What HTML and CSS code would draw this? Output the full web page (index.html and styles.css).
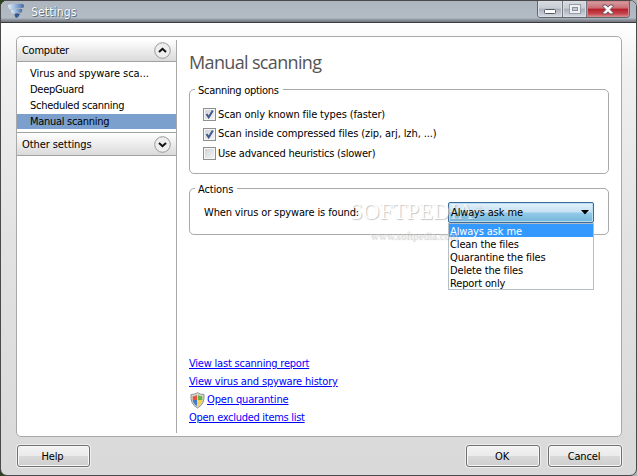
FILE: index.html
```html
<!DOCTYPE html>
<html lang="en">
<head>
<meta charset="utf-8">
<title>Settings</title>
<link rel="stylesheet" href="styles.css">
</head>
<body>
<div class="window">
  <header class="titlebar">
    <svg class="logo" width="18" height="18" viewBox="0 0 18 18">
      <defs><linearGradient id="lg" x1="0" x2="1"><stop offset="0" stop-color="#e4eefa"/><stop offset=".5" stop-color="#8fb0da"/><stop offset="1" stop-color="#44689f"/></linearGradient></defs>
      <path d="M1 4Q6 2 16 3Q18 5 16 7Q9 6 4 9Q1 8 1 4Z" fill="url(#lg)"/>
      <path d="M4 9.5Q8 7 15 8Q16 11 13 12Q9 10 7 13Q4 12 4 9.5Z" fill="url(#lg)"/>
      <path d="M7.5 13.5Q9 11.5 13 13Q12 16 9 17Q7.5 15 7.5 13.5Z" fill="#34588f"/>
    </svg>
    <h1 class="caption">Settings</h1>
    <div class="controls">
      <span class="control minimize"><svg width="12" height="6"><rect x=".5" y=".5" width="11" height="4" rx="1" fill="#fff" stroke="#555b65"/></svg></span>
      <span class="control maximize"><svg width="12" height="10"><rect x=".5" y=".5" width="11" height="9" fill="#eef0f3" stroke="#989ea8"/><rect x="3.5" y="3.5" width="5" height="3" fill="#c3cad3" stroke="#8a919b"/></svg></span>
      <span class="control close"><svg width="12" height="11" viewBox="0 0 12 11"><path d="M1 1H4L6 3.2L8 1H11V2.5L8.2 5.5L11 8.5V10H8L6 7.8L4 10H1V8.5L3.8 5.5L1 2.5Z" fill="#fff" stroke="#6b5660"/></svg></span>
    </div>
  </header>
  <main class="panel">
    <nav class="sidebar">
      <div class="group first"><span class="tight">Computer</span>
        <svg width="17" height="17"><circle cx="8.5" cy="8.5" r="7.8" fill="#eee" stroke="#999"/><path d="M5 10L8.5 6.8L12 10" fill="none" stroke="#111" stroke-width="2"/></svg>
      </div>
      <ul class="items">
        <li class="virus">Virus and spyware sca...</li>
        <li class="tight">DeepGuard</li>
        <li class="tight">Scheduled scanning</li>
        <li class="current tight">Manual scanning</li>
      </ul>
      <div class="group second"><span>Other settings</span>
        <svg width="17" height="17"><circle cx="8.5" cy="8.5" r="7.8" fill="#eee" stroke="#999"/><path d="M5 7L8.5 10.2L12 7" fill="none" stroke="#111" stroke-width="2"/></svg>
      </div>
    </nav>
    <section class="content">
      <h2>Manual scanning</h2>
      <div class="box options">
        <div class="legend tight"><span>Scanning options</span></div>
        <label class="check"><i class="tick"><svg width="9" height="9"><path d="M1.5 4L3.7 7.3L7.8 .5" fill="none" stroke="#43598f" stroke-width="2"/></svg></i><span>Scan only known file types (faster)</span></label>
        <label class="check"><i class="tick"><svg width="9" height="9"><path d="M1.5 4L3.7 7.3L7.8 .5" fill="none" stroke="#43598f" stroke-width="2"/></svg></i><span class="zip">Scan inside compressed files (zip, arj, lzh, ...)</span></label>
        <label class="check"><i class="tick"></i><span class="slower">Use advanced heuristics (slower)</span></label>
      </div>
      <div class="box actions">
        <div class="legend"><span>Actions</span></div>
        <div class="row"><span>When virus or spyware is found:</span>
          <div class="combo"><span>Always ask me</span><svg width="8" height="5"><path d="M0 0H8L4 4.5Z"/></svg>
            <ul class="menu">
              <li class="active">Always ask me</li><li>Clean the files</li><li>Quarantine the files</li><li>Delete the files</li><li>Report only</li>
            </ul>
          </div>
        </div>
        <div class="watermark"><b>SOFTPEDIA<sup>™</sup></b><small>www.softpedia.com</small></div>
      </div>
      <div class="links">
        <a class="slower">View last scanning report</a>
        <a class="history">View virus and spyware history</a>
        <div class="shielded">
          <svg width="15" height="17" viewBox="0 0 15 17"><path d="M7.5 .7Q10 2.5 14 2.5Q15 12 7.5 16Q0 12 1 2.5Q5 2.5 7.5 .7Z" fill="#d6d8d6" stroke="#8d918d"/><path d="M7 3V8H2.7V4.3Q5 4.2 7 3Z" fill="#e2573c"/><path d="M8 3Q10 4.2 12.3 4.3V8H8Z" fill="#62b543"/><path d="M2.7 8H7V14Q3.4 12 2.7 8Z" fill="#3e7dcc"/><path d="M8 8H12.3Q11.6 12 8 14Z" fill="#f4d14b"/></svg>
          <a>Open quarantine</a>
        </div>
        <a class="tight">Open excluded items list</a>
      </div>
    </section>
  </main>
  <footer class="buttons"><button>Help</button><button class="ok">OK</button><button>Cancel</button></footer>
</div>
</body>
</html>
```
FILE: styles.css
```css
* { box-sizing: border-box; }
body { margin: 0; width: 637px; height: 476px; overflow: hidden; background: linear-gradient(90deg, #2d421e, #888 50%, #b0b0b0); color: #000; font: 11px/16px "DejaVu Sans Condensed", "DejaVu Sans", sans-serif; font-stretch: condensed; letter-spacing: -.14px; }
h1, h2, ul { margin: 0; padding: 0; font-weight: normal; list-style: none; }
span, a, li { white-space: nowrap; }
.tight { letter-spacing: -.29px; }
.slower { letter-spacing: -.21px; }
.history { letter-spacing: -.18px; }
.virus { letter-spacing: -.06px; }
.zip { letter-spacing: -.1px; }
.window { width: 637px; height: 476px; border: 1px solid #4a4a4d; border-radius: 7px; overflow: hidden; background: linear-gradient(#fff 22px, #f0f0f0 70px, #e2e2e2 240px, #d9d9d9); }
.titlebar { height: 22px; display: flex; align-items: flex-start; padding-left: 6px; background: linear-gradient(#adb5bf, #b3bbc5 80%, #858c95 92%, #73777d); border-bottom: 1px solid #393b3e; }
.caption { font-size: 12px; line-height: 22px; margin-left: 6px; color: #fff; text-shadow: 1px 1px 0 #66717d, 0 0 1px #56606c; letter-spacing: .15px; }
.controls { display: flex; width: 93px; height: 17px; margin-left: auto; margin-right: 6px; border: 1px solid #62676e; border-top: 0; border-radius: 0 0 4px 4px; overflow: hidden; }
.control { width: 25px; display: flex; justify-content: center; align-items: center; background: linear-gradient(#d7dae0, #c8cdd4 45%, #a8afb9 50%, #d5dae1); border-right: 1px solid #737981; box-shadow: inset 0 0 0 1px #d9dee4; }
.minimize { padding-top: 5px; }
.close { width: 42px; border: 0; background: linear-gradient(#d7a1a5, #c96c73 45%, #b51e29 50%, #c6474e 80%, #dc9397); box-shadow: inset 0 0 0 1px #d4868b; }
.panel { margin: 13px 14px 0 15px; height: 401px; border: 1px solid #a9a9a9; border-radius: 5px; background: #fff; display: flex; padding: 3px 0; }
.sidebar { width: 160px; border-right: 1px solid #a9a9a9; }
.group { height: 24px; display: flex; justify-content: space-between; align-items: center; padding: 0 5px 0 5px; background: linear-gradient(#fff, #dadada); border-top: 1px solid #a1a1a1; border-bottom: 1px solid #a1a1a1; }
.group.first { height: 22px; border-top: 0; }
.group.second span { padding-top: 1px; letter-spacing: -.08px; }
.items { padding: 4px 0 2px; height: 70px; }
.items li { padding-left: 13px; height: 16px; }
.items .current { height: 15px; line-height: 15px; background: #7ba0cd; }
.content { flex: 1; padding: 9px 12px 0; display: flex; flex-direction: column; }
h2 { font: 18px/26px "Open Sans", sans-serif; color: #545454; letter-spacing: -.65px; }
.box { width: 420px; border: 1px solid #a9a9a9; border-radius: 5px; position: relative; }
.options { height: 85px; margin-top: 14px; padding: 15px 13px; }
.legend { position: absolute; top: -7px; left: 5px; height: 16px; padding: 0 4px 0 3px; background: #fff; }
.check { display: flex; align-items: center; height: 19.5px; gap: 2px; }
.tick { width: 13px; height: 13px; border: 1px solid #8e8f8f; background: linear-gradient(135deg, #ccd0d5, #f7f7f7); box-shadow: inset 0 0 0 1px #f5f5f5; display: grid; place-items: center; }
.actions { height: 47px; margin-top: 14px; padding: 13px 14px; }
.row { display: flex; align-items: center; height: 21px; }
.row > span { position: relative; z-index: 3; }
.combo { position: relative; margin-left: auto; width: 146px; height: 21px; border: 1px solid #3c6c9b; border-radius: 2px; box-shadow: inset 0 0 0 1px #b9ddf0; background: linear-gradient(#e3f1fa, #c5e1f2 48%, #94cae8 52%, #73b6dc); display: flex; align-items: center; justify-content: space-between; padding: 0 4px 0 2px; }
.combo > span { position: relative; z-index: 3; padding-top: 1px; }
.menu { position: absolute; left: -1px; top: 20px; width: 146px; height: 67px; border: 1px solid #b4bec8; background: #fff; line-height: 15px; }
.menu li { height: 13px; padding-left: 1px; }
.menu .active { background: #3399ff; color: #fff; }
.watermark { position: absolute; left: 160px; top: 12px; z-index: 2; font-family: "Liberation Serif", serif; color: #fff; text-shadow: 1px 1px 1px #999; opacity: .55; display: flex; flex-direction: column; line-height: 22px; pointer-events: none; }
.watermark b { font-size: 23px; font-weight: normal; letter-spacing: 0; }
.watermark sup { font-size: 7px; line-height: 0; }
.watermark small { font-size: 11px; line-height: 24px; margin-left: 20px; letter-spacing: 0; color: #ddd; }
.links { margin-top: 120px; line-height: 18px; display: flex; flex-direction: column; align-items: flex-start; color: #00f; }
.links a { text-decoration: underline; height: 18px; }
.shielded { display: flex; align-items: center; gap: 2px; height: 18px; padding-left: 1px; }
.buttons { display: flex; gap: 8px; padding: 8px 14px 0 15px; }
button { width: 74px; height: 22px; padding: 1px 2px 0 0; font: inherit; letter-spacing: inherit; color: #000; border: 1px solid #707070; border-radius: 3px; background: linear-gradient(#f2f2f2, #ebebeb 48%, #d9d9d9 52%, #cecece); box-shadow: inset 0 0 0 1px #f8f8f8, 0 0 0 1px #eee; }
.buttons button:first-child { width: 73px; margin-left: 1px; }
.ok { margin-left: auto; }
```
